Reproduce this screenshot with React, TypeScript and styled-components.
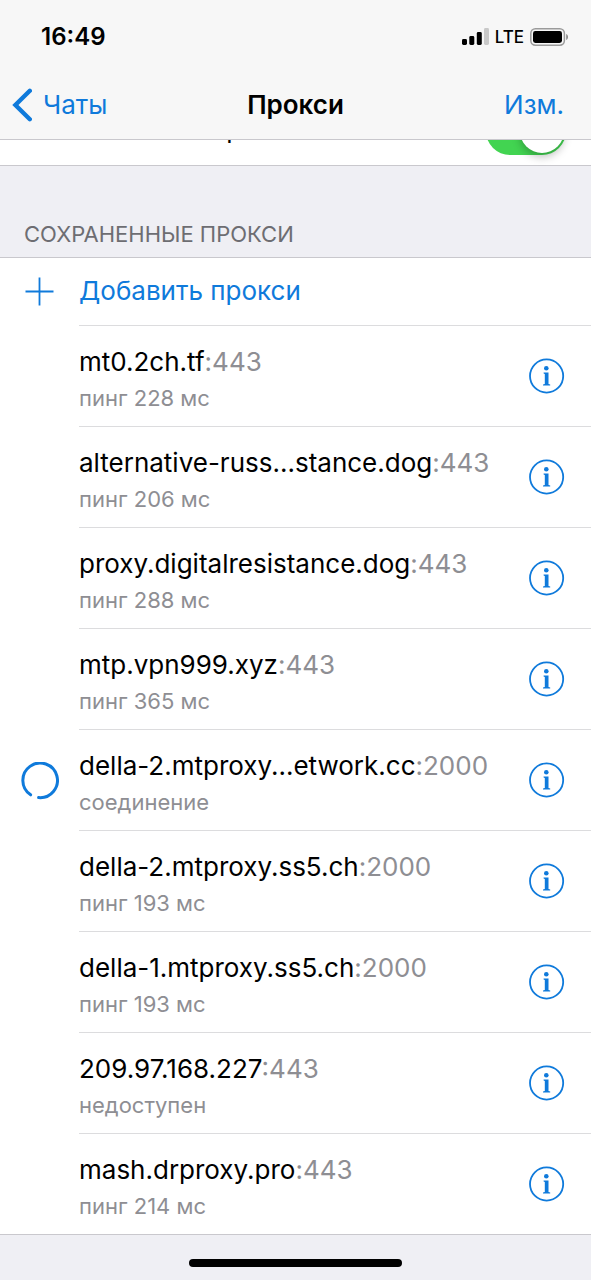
import React from 'react';
import styled, { createGlobalStyle } from 'styled-components';

const BLUE = '#0f7adb';
const GREY = '#8e8e93';
const LINE = '#c9c8cd';

const GlobalStyle = createGlobalStyle`
  * { box-sizing: border-box; }
  body {
    margin: 0;
    background: #efeff4;
    color: #000;
    font-family: Inter, Roboto, "Liberation Sans", sans-serif;
  }
  button { font-family: inherit; }
`;

const Screen = styled.div`
  min-height: 100vh;
  display: flex;
  flex-direction: column;
`;

const Header = styled.header`
  position: sticky;
  top: 0;
  z-index: 1;
  background: #f7f7f7;
  border-bottom: 1px solid ${LINE};
`;

const StatusBar = styled.div`
  display: flex;
  align-items: center;
  justify-content: space-between;
  height: 70px;
  padding: 4px 22px 0 41px;
`;

const Time = styled.span`
  font-size: 24px;
  line-height: 28px;
  font-weight: 600;
`;

const StatusIcons = styled.div`
  display: flex;
  align-items: center;
  gap: 6px;
  font-size: 17px;
  line-height: 24px;
  font-weight: 500;
`;

const NavBar = styled.nav`
  display: grid;
  grid-template-columns: 1fr auto 1fr;
  align-items: center;
  height: 69px;
`;

const NavLink = styled.a`
  display: flex;
  align-items: center;
  gap: 11px;
  padding-left: 12px;
  color: ${BLUE};
  font-size: 26px;
  line-height: 32px;
  text-decoration: none;
`;

const NavButton = styled.button`
  justify-self: end;
  padding: 0 27px 0 0;
  border: 0;
  background: none;
  color: ${BLUE};
  font-size: 26px;
  line-height: 32px;
`;

const Title = styled.h1`
  margin: 0;
  font-size: 26px;
  line-height: 32px;
  font-weight: 600;
`;

const ToggleRow = styled.label`
  display: flex;
  align-items: center;
  justify-content: space-between;
  height: 70px;
  margin-top: -44px;
  padding: 0 25px 0 24px;
  background: #fff;
  border-bottom: 1px solid ${LINE};
  font-size: 26px;
  line-height: 32px;
`;

const ToggleLabel = styled.span`
  padding-bottom: 4px;
`;

const Switch = styled.input`
  appearance: none;
  display: flex;
  align-items: center;
  justify-content: flex-end;
  width: 80px;
  height: 48px;
  margin: 0;
  padding: 2px;
  border-radius: 24px;
  background: #42d451;
  &::before {
    content: '';
    width: 44px;
    height: 44px;
    border-radius: 50%;
    background: #fff;
    box-shadow: 0 4px 8px rgba(0, 0, 0, 0.25);
  }
`;

const SectionTitle = styled.h2`
  margin: 0;
  padding: 56px 24px 11px;
  color: #6d6d72;
  font-size: 22px;
  line-height: 24px;
  font-weight: 400;
`;

const Panel = styled.section`
  background: #fff;
  border-top: 1px solid ${LINE};
  border-bottom: 1px solid ${LINE};
`;

const AddButton = styled.button`
  display: grid;
  grid-template-columns: 79px 1fr;
  align-items: stretch;
  width: 100%;
  height: 68px;
  padding: 0;
  border: 0;
  background: none;
  color: ${BLUE};
  font-size: 26px;
  line-height: 32px;
  text-align: left;
`;

const IconSlot = styled.span`
  display: flex;
  align-items: center;
  justify-content: center;
`;

const AddLabel = styled.span`
  padding: 17px 0;
  border-bottom: 1px solid #dcdcde;
`;

const List = styled.ul`
  margin: 0;
  padding: 0;
  list-style: none;
`;

const Row = styled.li<{ $last: boolean }>`
  display: grid;
  grid-template-columns: 79px 1fr;
  height: ${(p) => (p.$last ? 100 : 101)}px;
`;

const RowBody = styled.div<{ $last: boolean }>`
  display: flex;
  align-items: center;
  justify-content: space-between;
  min-width: 0;
  padding-right: 26px;
  border-bottom: ${(p) => (p.$last ? '0' : '1px solid #dcdcde')};
`;

const ProxyText = styled.div`
  padding-top: 5px;
`;

const Host = styled.div`
  font-size: 26px;
  line-height: 32px;
  white-space: nowrap;
`;

const Port = styled.span`
  color: ${GREY};
`;

const Status = styled.div`
  margin-top: 6px;
  color: ${GREY};
  font-size: 22px;
  line-height: 28px;
`;

const InfoButton = styled.button`
  display: flex;
  padding: 0;
  border: 0;
  background: none;
  color: ${BLUE};
`;

const Footer = styled.footer`
  display: flex;
  justify-content: center;
  padding: 24px 0 13px;
`;

const HomeIndicator = styled.div`
  width: 36%;
  height: 8px;
  border-radius: 4px;
  background: #000;
`;

const SignalIcon = () => (
  <svg width="27" height="18" viewBox="0 0 27 18" aria-hidden="true">
    <rect x="0" y="11" width="5" height="6" rx="1.4" />
    <rect x="7.3" y="8" width="5" height="9" rx="1.4" />
    <rect x="14.8" y="4" width="5" height="13" rx="1.4" />
    <rect x="22" y="0" width="5" height="17" rx="1.4" fill="#c9c9c9" />
  </svg>
);

const BatteryIcon = () => (
  <svg width="39" height="18" viewBox="0 0 39 18" aria-hidden="true">
    <rect x="0.8" y="0.8" width="33.6" height="16.4" rx="4.6" fill="none" stroke="#9b9b9b" strokeWidth="1.5" />
    <rect x="3" y="3" width="29" height="12" rx="2.4" />
    <path d="M36.2 6 C38.6 7 38.6 11 36.2 12 Z" fill="#8a8a8a" />
  </svg>
);

const BackIcon = () => (
  <svg width="20" height="34" viewBox="0 0 20 34" fill="none" stroke={BLUE} strokeWidth="4.4" aria-hidden="true">
    <path d="M17.8 2.8 L3.4 17 L17.8 31.2" strokeLinecap="round" strokeLinejoin="miter" />
  </svg>
);

const PlusIcon = () => (
  <svg width="30" height="30" viewBox="0 0 30 30" stroke={BLUE} strokeWidth="1.8" aria-hidden="true">
    <path d="M14.5 0.5 V28.5 M0.5 14.5 H28.5" />
  </svg>
);

const SpinnerIcon = () => (
  <svg width="38" height="38" viewBox="0 0 38 38" fill="none" stroke={BLUE} strokeWidth="3" strokeLinecap="round" aria-hidden="true">
    <path d="M9.6 32.8 A17.3 17.3 0 1 1 17.6 35.6" />
  </svg>
);

const InfoIcon = () => (
  <svg width="36" height="36" viewBox="0 0 36 36" aria-hidden="true">
    <circle cx="17.6" cy="18" r="16.6" fill="none" stroke={BLUE} strokeWidth="1.8" />
    <circle cx="17.3" cy="10.3" r="2.3" fill={BLUE} />
    <path d="M14.6 14.4 H19.5 V26 L21.2 26.5 V27.6 H14 V26.5 L15.8 26 V16 L14.6 15.5 Z" fill={BLUE} />
  </svg>
);

const proxies = [
  { host: 'mt0.2ch.tf', port: 443, status: 'пинг 228 мс' },
  { host: 'alternative-russ...stance.dog', port: 443, status: 'пинг 206 мс' },
  { host: 'proxy.digitalresistance.dog', port: 443, status: 'пинг 288 мс' },
  { host: 'mtp.vpn999.xyz', port: 443, status: 'пинг 365 мс' },
  { host: 'della-2.mtproxy...etwork.cc', port: 2000, status: 'соединение', connecting: true },
  { host: 'della-2.mtproxy.ss5.ch', port: 2000, status: 'пинг 193 мс' },
  { host: 'della-1.mtproxy.ss5.ch', port: 2000, status: 'пинг 193 мс' },
  { host: '209.97.168.227', port: 443, status: 'недоступен' },
  { host: 'mash.drproxy.pro', port: 443, status: 'пинг 214 мс' },
];

export default function App() {
  return (
    <Screen>
      <GlobalStyle />
      <Header>
        <StatusBar>
          <Time>16:49</Time>
          <StatusIcons>
            <SignalIcon />
            <span>LTE</span>
            <BatteryIcon />
          </StatusIcons>
        </StatusBar>
        <NavBar>
          <NavLink href="#chats">
            <BackIcon />
            Чаты
          </NavLink>
          <Title>Прокси</Title>
          <NavButton type="button">Изм.</NavButton>
        </NavBar>
      </Header>
      <main>
        <ToggleRow>
          <ToggleLabel>Использовать прокси</ToggleLabel>
          <Switch type="checkbox" role="switch" defaultChecked />
        </ToggleRow>
        <SectionTitle>СОХРАНЕННЫЕ ПРОКСИ</SectionTitle>
        <Panel>
          <AddButton type="button">
            <IconSlot>
              <PlusIcon />
            </IconSlot>
            <AddLabel>Добавить прокси</AddLabel>
          </AddButton>
          <List>
            {proxies.map((p, i) => {
              const last = i === proxies.length - 1;
              return (
                <Row key={p.host} $last={last}>
                  <IconSlot>{p.connecting && <SpinnerIcon />}</IconSlot>
                  <RowBody $last={last}>
                    <ProxyText>
                      <Host>
                        {p.host}
                        <Port>:{p.port}</Port>
                      </Host>
                      <Status>{p.status}</Status>
                    </ProxyText>
                    <InfoButton type="button" aria-label={`Сведения: ${p.host}`}>
                      <InfoIcon />
                    </InfoButton>
                  </RowBody>
                </Row>
              );
            })}
          </List>
        </Panel>
      </main>
      <Footer>
        <HomeIndicator />
      </Footer>
    </Screen>
  );
}
